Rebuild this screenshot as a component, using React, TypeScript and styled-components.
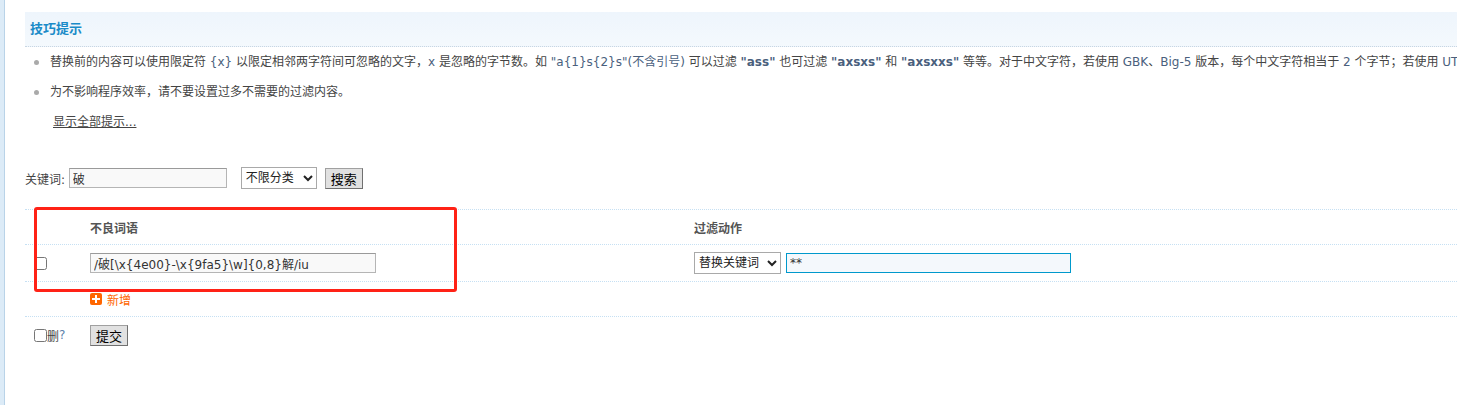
import React from 'react'
import styled, { createGlobalStyle } from 'styled-components'

const FONT = `'DejaVu Sans', 'Noto Sans CJK SC', sans-serif`

const GlobalStyle = createGlobalStyle`
  html, body {
    margin: 0;
    padding: 0;
    background: #fff;
    overflow: hidden;
  }
  body {
    font: 12px ${FONT};
    color: #444;
  }
`

const Page = styled.div`
  display: flex;
  min-height: 405px;
  width: 1457px;
  overflow: hidden;
`
const SideStrip = styled.div`
  width: 4px;
  flex: none;
  background: #dcebf7;
  border-right: 1px solid #b9d3e8;
`
const Main = styled.div`
  flex: 1;
  min-width: 0;
  margin-left: 20px;
  padding-top: 12px;
  position: relative;
`
const TipsHead = styled.div`
  height: 34px;
  line-height: 34px;
  padding-left: 5px;
  background: linear-gradient(#eef5fc, #f4f9fd);
  border-bottom: 1px dotted #c8d6e2;
  font-weight: bold;
  font-size: 13px;
  color: #1a8bc8;
`
const TipsList = styled.ul`
  margin: 0;
  padding: 0;
  list-style: none;
`
const TipItem = styled.li`
  position: relative;
  height: 30px;
  line-height: 30px;
  padding-left: 25px;
  white-space: nowrap;
  color: #444;

  &::before {
    content: '';
    position: absolute;
    left: 9px;
    top: 13px;
    width: 5px;
    height: 5px;
    border-radius: 50%;
    background: #aaa;
  }
`
const Code = styled.span<{ bold?: boolean }>`
  color: #4a5f7d;
  font-weight: ${({ bold }) => (bold ? 'bold' : 'normal')};
`
const MoreLink = styled.a`
  display: block;
  height: 30px;
  line-height: 30px;
  padding-left: 28px;
  color: #444;
  text-decoration: underline;
`
const SearchRow = styled.div`
  display: flex;
  align-items: center;
  margin-top: 30px;
  height: 22px;
  color: #444;
`
const TextInput = styled.input<{ w: number; focused?: boolean }>`
  box-sizing: border-box;
  width: ${({ w }) => w}px;
  height: 20px;
  padding: 0 3px;
  border: 1px solid ${({ focused }) => (focused ? '#0099cc' : '#b5b5b5')};
  border-top-color: ${({ focused }) => (focused ? '#0099cc' : '#9a9a9a')};
  background: ${({ focused }) => (focused ? '#f4f8fc' : '#f9f9f9')};
  font: 12px ${FONT};
  color: #333;
  outline: none;
`
const Select = styled.select<{ w: number }>`
  box-sizing: border-box;
  width: ${({ w }) => w}px;
  height: 22px;
  border: 1px solid #a9a9a9;
  background: #fff;
  font: 12px ${FONT};
  color: #222;
  padding: 0;
`
const Button = styled.button`
  box-sizing: border-box;
  height: 21px;
  padding: 0 5px;
  border: 1px solid #707070;
  border-top-color: #a0a0a0;
  border-left-color: #a0a0a0;
  background: #e1e1e1;
  font: 13px ${FONT};
  color: #000;
  border-radius: 0;
`
const Table = styled.div`
  margin-top: 20px;
  border-top: 1px dotted #c6e0f3;
`
const Row = styled.div<{ h: number; noBorder?: boolean }>`
  display: grid;
  grid-template-columns: 65px 604px 1fr;
  align-items: center;
  height: ${({ h }) => h}px;
  border-bottom: ${({ noBorder }) => (noBorder ? 'none' : '1px dotted #c6e0f3')};
`
const HeadCell = styled.div`
  font-weight: bold;
  color: #555;
  font-size: 12px;
`
const CheckCell = styled.label`
  display: flex;
  align-items: center;
  padding-left: 9px;
  color: #444;
`
const Check = styled.input`
  margin: 0;
  width: 13px;
  height: 13px;
`
const Hint = styled.span`
  color: #5b7faa;
`
const ActionCell = styled.div`
  display: flex;
  align-items: center;
  gap: 5px;
`
const AddLink = styled.a`
  display: flex;
  align-items: center;
  gap: 5px;
  color: #f60;
  font-size: 12px;
  text-decoration: none;
`
const Spacer = styled.span<{ w: number }>`
  display: inline-block;
  width: ${({ w }) => w}px;
`
const Highlight = styled.div`
  position: absolute;
  left: 9px;
  top: 207px;
  width: 423px;
  height: 85px;
  box-sizing: border-box;
  border: 3px solid #ff2216;
  border-radius: 3px;
  pointer-events: none;
`

const PlusIcon = () => (
  <svg width="12" height="12" viewBox="0 0 12 12">
    <rect width="12" height="12" rx="2" fill="#f60" />
    <rect x="5" y="2" width="2" height="8" fill="#fff" />
    <rect x="2" y="5" width="8" height="2" fill="#fff" />
  </svg>
)

export default function App() {
  return (
    <>
      <GlobalStyle />
      <Page>
        <SideStrip />
        <Main>
          <TipsHead>技巧提示</TipsHead>
          <TipsList>
            <TipItem>
              替换前的内容可以使用限定符 <Code>{'{x}'}</Code> 以限定相邻两字符间可忽略的文字，<Code>x</Code> 是忽略的字节数。如 <Code>"a{'{1}'}s{'{2}'}s"(不含引号)</Code> 可以过滤 <Code bold>"ass"</Code> 也可过滤 <Code bold>"axsxs"</Code> 和 <Code bold>"axsxxs"</Code> 等等。对于中文字符，若使用 <Code>GBK</Code>、<Code>Big-5</Code> 版本，每个中文字符相当于 <Code>2</Code> 个字节；若使用 <Code>UTF-8</Code> 版本，每个中文字符相当于 <Code>3</Code> 个字节
            </TipItem>
            <TipItem>为不影响程序效率，请不要设置过多不需要的过滤内容。</TipItem>
          </TipsList>
          <MoreLink>显示全部提示...</MoreLink>

          <SearchRow>
            关键词:&nbsp;
            <TextInput w={158} defaultValue="破" />
            <Spacer w={14} />
            <Select w={76}>
              <option>不限分类</option>
            </Select>
            <Spacer w={8} />
            <Button>搜索</Button>
          </SearchRow>

          <Table>
            <Row h={34}>
              <div />
              <HeadCell>不良词语</HeadCell>
              <HeadCell>过滤动作</HeadCell>
            </Row>
            <Row h={36}>
              <CheckCell>
                <Check type="checkbox" />
              </CheckCell>
              <div>
                <TextInput w={286} defaultValue="/破[\x{4e00}-\x{9fa5}\w]{0,8}解/iu" />
              </div>
              <ActionCell>
                <Select w={87}>
                  <option>替换关键词</option>
                </Select>
                <TextInput w={285} focused defaultValue="**" />
              </ActionCell>
            </Row>
            <Row h={34}>
              <div />
              <AddLink>
                <PlusIcon />
                新增
              </AddLink>
              <div />
            </Row>
            <Row h={36} noBorder>
              <CheckCell>
                <Check type="checkbox" />
                删<Hint>?</Hint>
              </CheckCell>
              <div>
                <Button>提交</Button>
              </div>
              <div />
            </Row>
          </Table>
          <Highlight />
        </Main>
      </Page>
    </>
  )
}
